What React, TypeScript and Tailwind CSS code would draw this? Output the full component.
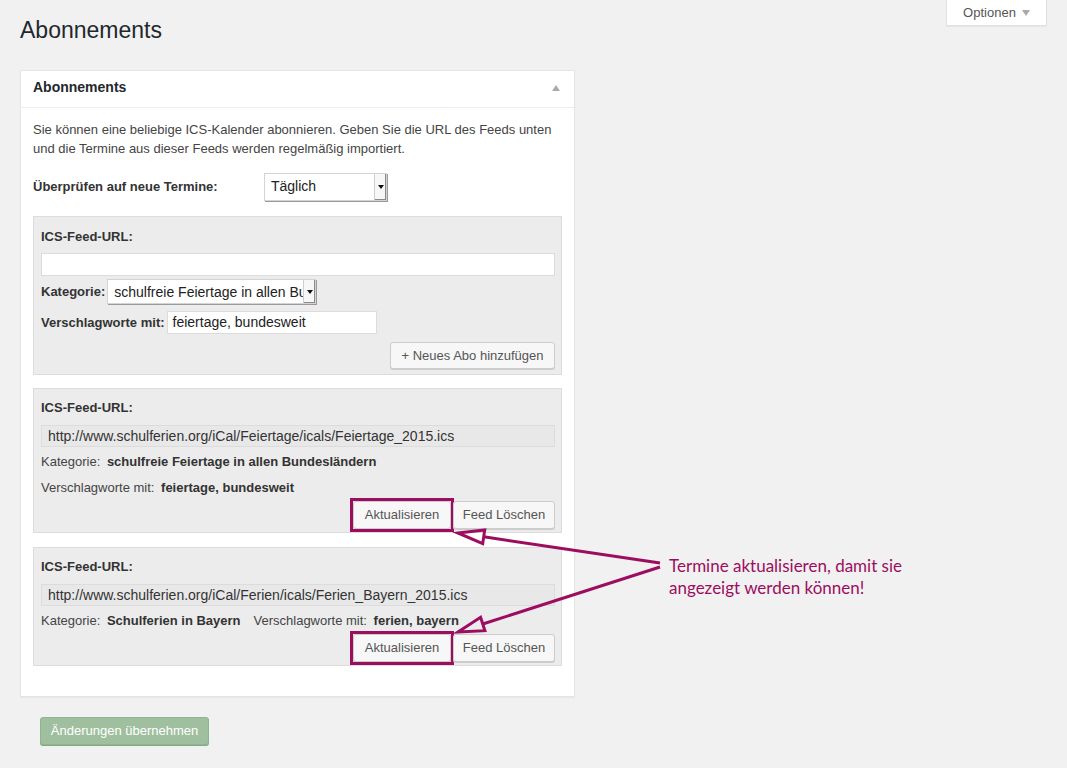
const SelectBox = ({ value, width }: { value: string; width: string }) => (
  <div className={`flex h-full ${width} items-stretch border border-[#d4d4d4] bg-white shadow-[1px_1px_0_#9a9a9a]`}>
    <span className="flex-1 overflow-hidden whitespace-nowrap pl-[6px] text-[14px] leading-[24px] text-[#222]">{value}</span>
    <span className="flex w-[12px] items-center justify-center border-l border-[#cfcfcf] bg-[#f7f7f7] shadow-[inset_-1px_-1px_0_#8a8a8a]">
      <svg width="6" height="4" viewBox="0 0 6 4"><path d="M0 0h6L3 4z" fill="#111" /></svg>
    </span>
  </div>
);

const Btn = ({ label, width, highlight }: { label: string; width: string; highlight?: boolean }) => (
  <span className="relative inline-flex">
    <button
      className={`h-[28px] ${width} rounded-[3px] border border-[#cccccc] bg-[#f7f7f7] text-[13px] text-[#555] shadow-[0_1px_0_#ccc]`}
    >
      {label}
    </button>
    {highlight && <span className="pointer-events-none absolute -inset-[3px] border-[3px] border-[#9c0d5f]" />}
  </span>
);

const FeedBox = ({
  url,
  children,
}: {
  url: string;
  children: React.ReactNode;
}) => (
  <div className="border border-[#dcdcdc] bg-[#ececec] pb-[3px] pl-[7px] pr-[6px] pt-[10px]">
    <div className="text-[13px] font-bold leading-[18px] text-[#333]">ICS-Feed-URL:</div>
    <div className="mt-[8px] h-[22px] border border-[#dcdcdc] bg-[#e8e8e8] pl-[6px] text-[14px] leading-[20px] text-[#333]">{url}</div>
    {children}
  </div>
);

export default function App() {
  return (
    <div className="relative min-h-[768px] bg-[#f1f1f1] font-['Liberation_Sans',Arial,sans-serif] text-[#444]">
      <div className="flex items-start justify-between pl-5 pr-5">
        <h1 className="pt-[16px] text-[23px] leading-[28px] text-[#23282d]">Abonnements</h1>
        <div className="flex h-[26px] w-[101px] items-center justify-center gap-[6px] border border-t-0 border-[#e1e1e1] bg-white text-[13px] text-[#555] shadow-[0_1px_1px_rgba(0,0,0,0.04)]">
          Optionen
          <svg width="8" height="6" viewBox="0 0 8 6"><path d="M0 0h8L4 6z" fill="#aaa" /></svg>
        </div>
      </div>

      <div className="ml-5 mt-[26px] w-[555px] border border-[#e5e5e5] bg-white shadow-[0_1px_1px_rgba(0,0,0,0.04)]">
        <div className="flex h-[37px] items-center justify-between border-b border-[#eeeeee] pb-[3px] pl-3 pr-[14px]">
          <span className="text-[14px] font-bold text-[#23282d]">Abonnements</span>
          <svg width="8" height="6" viewBox="0 0 8 6"><path d="M4 0l4 6H0z" fill="#aaa" /></svg>
        </div>

        <div className="px-3 pb-[30px] pt-[12px]">
          <p className="text-[13px] leading-[19px] text-[#444]">
            Sie können eine beliebige ICS-Kalender abonnieren. Geben Sie die URL des Feeds unten und die Termine aus dieser Feeds werden regelmäßig importiert.
          </p>

          <div className="mt-[15px] flex h-[28px] items-center">
            <span className="w-[231px] text-[13px] font-bold text-[#333]">Überprüfen auf neue Termine:</span>
            <SelectBox value="Täglich" width="w-[123px]" />
          </div>

          <div className="mt-[15px] flex flex-col">
            <div className="border border-[#dcdcdc] bg-[#ececec] pb-[5px] pl-[7px] pr-[6px] pt-[11px]">
              <div className="text-[13px] font-bold leading-[18px] text-[#333]">ICS-Feed-URL:</div>
              <div className="mt-[7px] h-[23px] border border-[#dcdcdc] bg-white" />
              <div className="mt-[3px] flex h-[25px] items-center gap-[2px]">
                <span className="text-[13px] font-bold text-[#333]">Kategorie:</span>
                <SelectBox value="schulfreie Feiertage in allen Bundesländern" width="w-[209px]" />
              </div>
              <div className="mt-[7px] flex h-[23px] items-center gap-[2px]">
                <span className="text-[13px] font-bold text-[#333]">Verschlagworte mit:</span>
                <div className="h-full w-[210px] border border-[#dcdcdc] bg-white pl-[5px] text-[14px] leading-[20px] text-[#222]">feiertage, bundesweit</div>
              </div>
              <div className="mt-[8px] flex justify-end">
                <button className="h-[27px] w-[165px] rounded-[3px] border border-[#cccccc] bg-[#f7f7f7] text-[13px] text-[#555] shadow-[0_1px_0_#ccc]">
                  + Neues Abo hinzufügen
                </button>
              </div>
            </div>

            <div className="mt-[13px]">
              <FeedBox url="http://www.schulferien.org/iCal/Feiertage/icals/Feiertage_2015.ics">
                <div className="mt-[6px] text-[13px] leading-[18px] text-[#444]">
                  Kategorie: <b className="ml-[3px] text-[#333]">schulfreie Feiertage in allen Bundesländern</b>
                </div>
                <div className="mt-[8px] text-[13px] leading-[18px] text-[#444]">
                  Verschlagworte mit: <b className="ml-[3px] text-[#333]">feiertage, bundesweit</b>
                </div>
                <div className="mt-[4px] flex justify-end gap-[2px]">
                  <Btn label="Aktualisieren" width="w-[98px]" highlight />
                  <Btn label="Feed Löschen" width="w-[102px]" />
                </div>
              </FeedBox>
            </div>

            <div className="mt-[14px]">
              <FeedBox url="http://www.schulferien.org/iCal/Ferien/icals/Ferien_Bayern_2015.ics">
                <div className="mt-[6px] flex gap-[13px] text-[13px] leading-[18px] text-[#444]">
                  <span>
                    Kategorie: <b className="ml-[3px] text-[#333]">Schulferien in Bayern</b>
                  </span>
                  <span>
                    Verschlagworte mit: <b className="ml-[3px] text-[#333]">ferien, bayern</b>
                  </span>
                </div>
                <div className="mt-[4px] flex justify-end gap-[2px]">
                  <Btn label="Aktualisieren" width="w-[98px]" highlight />
                  <Btn label="Feed Löschen" width="w-[102px]" />
                </div>
              </FeedBox>
            </div>
          </div>
        </div>
      </div>

      <div className="ml-[40px] mt-[20px]">
        <button className="h-[28px] w-[169px] rounded-[3px] border border-[#8fb48f] bg-[#9fbf9f] text-[13px] text-white shadow-[0_1px_0_#86a886]">
          Änderungen übernehmen
        </button>
      </div>

      {/* annotation */}
      <div className="absolute left-[669px] top-[555px] font-['Lato',sans-serif] text-[17px] leading-[22px] text-[#9c0d5f]">
        <div>Termine aktualisieren, damit sie</div>
        <div>angezeigt werden können!</div>
      </div>
      <svg className="pointer-events-none absolute left-0 top-0" width="1067" height="768">
        <g stroke="#9c0d5f" strokeWidth="3" fill="none" strokeLinejoin="miter">
          <line x1="660" y1="563" x2="483.7" y2="536.8" />
          <polygon points="458,533 484.7,529.9 482.7,543.7" />
          <line x1="660" y1="567" x2="482.8" y2="624" />
          <polygon points="458,632 484.9,630.7 480.6,617.3" />
        </g>
      </svg>
    </div>
  );
}
